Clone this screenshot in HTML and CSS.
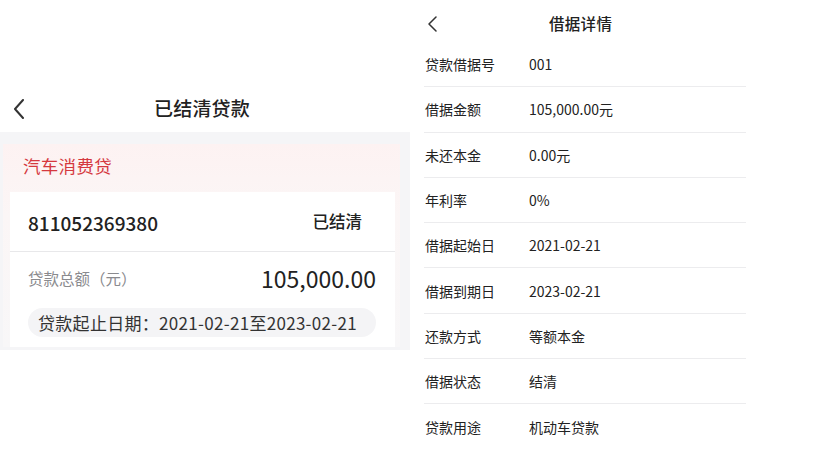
FILE: index.html
```html
<!DOCTYPE html>
<html lang="zh">
<head>
<meta charset="utf-8">
<link rel="stylesheet" href="styles.css">
</head>
<body>
<div class="page">
  <section class="left">
    <div class="top-space"></div>
    <header class="l-header">
      <svg class="l-back" width="12" height="20" viewBox="0 0 12 20"><polyline points="10,1 2,10 10,19" fill="none" stroke="#333" stroke-width="2" stroke-linecap="round" stroke-linejoin="round"/></svg>
      <h1 class="l-title">已结清贷款</h1>
    </header>
    <div class="gray">
      <div class="pink-card">
        <div class="product">汽车消费贷</div>
        <div class="loan-card">
          <div class="loan-top">
            <span class="loan-no">811052369380</span>
            <span class="loan-status">已结清</span>
          </div>
          <div class="loan-body">
            <div class="amount-row">
              <span class="amount-label">贷款总额（元）</span>
              <span class="amount">105,000.00</span>
            </div>
            <div class="date-pill">贷款起止日期：2021-02-21至2023-02-21</div>
          </div>
        </div>
      </div>
    </div>
  </section>
  <section class="right">
    <header class="r-header">
      <svg class="r-back" width="11" height="16" viewBox="0 0 11 16"><polyline points="9,1 2,8 9,15" fill="none" stroke="#333" stroke-width="1.5" stroke-linecap="round" stroke-linejoin="round"/></svg>
      <h2 class="r-title">借据详情</h2>
    </header>
    <ul class="rows">
      <li class="row"><span class="k">贷款借据号</span><span class="v">001</span></li>
      <li class="row"><span class="k">借据金额</span><span class="v">105,000.00元</span></li>
      <li class="row"><span class="k">未还本金</span><span class="v">0.00元</span></li>
      <li class="row"><span class="k">年利率</span><span class="v">0%</span></li>
      <li class="row"><span class="k">借据起始日</span><span class="v">2021-02-21</span></li>
      <li class="row"><span class="k">借据到期日</span><span class="v">2023-02-21</span></li>
      <li class="row"><span class="k">还款方式</span><span class="v">等额本金</span></li>
      <li class="row"><span class="k">借据状态</span><span class="v">结清</span></li>
      <li class="row last"><span class="k">贷款用途</span><span class="v">机动车贷款</span></li>
    </ul>
  </section>
</div>
</body>
</html>
```

FILE: styles.css
```css
* { box-sizing: border-box; }
html, body { margin: 0; padding: 0; background: #fff; }
body {
  font-family: "Noto Sans CJK SC", "Noto Sans", sans-serif;
  color: #222;
  width: 820px;
  height: 461px;
  overflow: hidden;
}
.page { display: flex; width: 820px; height: 461px; }

.left { width: 410px; flex: none; }
.top-space { height: 86px; }
.l-header {
  height: 46px;
  display: flex;
  align-items: center;
  justify-content: center;
  position: relative;
}
.l-back { position: absolute; left: 13px; top: 13px; }
.l-title {
  margin: 0 6px 4px 0;
  font-size: 19px;
  font-weight: 500;
  color: #222;
  letter-spacing: 0.2px;
}
.gray {
  background: #f5f5f7;
  padding: 12px 10px 3px 3px;
  height: 218px;
}
.pink-card {
  background: linear-gradient(180deg, #fdf2f2 0%, #fbf6f6 35%, #f8f7f8 100%);
  padding: 0 5px 0 7px;
  height: 203px;
}
.product {
  height: 48px;
  display: flex;
  align-items: center;
  padding: 0 0 5px 13px;
  font-size: 17.5px;
  color: #d5383e;
  letter-spacing: 0.3px;
}
.loan-card { background: #fff; height: 155px; }
.loan-top {
  height: 60px;
  display: flex;
  align-items: center;
  justify-content: space-between;
  padding: 0 33px 0 18px;
  border-bottom: 1px solid #e8e8ea;
}
.loan-no { font-size: 19px; font-weight: 500; color: #222; margin-top: 2px; }
.loan-status { font-size: 16.5px; font-weight: 500; color: #222; margin-bottom: 2px; }
.loan-body { padding: 0 19px 0 18px; }
.amount-row {
  height: 54px;
  display: flex;
  align-items: center;
  justify-content: space-between;
  padding-bottom: 2px;
}
.amount-label { font-size: 15.5px; color: #8a8a8e; }
.amount { font-size: 23px; color: #222; }
.date-pill {
  height: 29px;
  margin-top: 2px;
  border-radius: 15px;
  background: #f4f4f6;
  padding: 0 10px;
  display: flex;
  align-items: center;
  font-size: 17px;
  letter-spacing: 0.3px;
  color: #333;
}

.right { width: 410px; flex: none; padding-left: 14px; }
.r-header {
  height: 42px;
  display: flex;
  align-items: center;
  position: relative;
}
.r-back { position: absolute; left: 3px; top: 16px; }
.r-title {
  margin: 4px 0 0 125px;
  font-size: 15.5px;
  font-weight: 500;
  color: #222;
  letter-spacing: 0.3px;
}
.rows { list-style: none; margin: 0; padding: 0; width: 322px; }
.row {
  height: 45.3px;
  display: flex;
  align-items: center;
  border-bottom: 1px solid #ececee;
  font-size: 14px;
  color: #222;
  padding-left: 1px;
}
.row.last { border-bottom: none; }
.k { width: 104px; color: #222; }
.v { color: #222; }
```
